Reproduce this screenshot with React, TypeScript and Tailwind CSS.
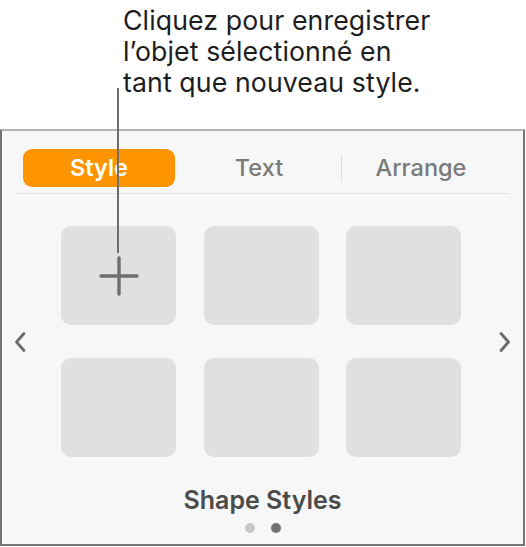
import { useState } from 'react';

const tabs = ['Style', 'Text', 'Arrange'];
const tiles = [0, 1, 2, 3, 4, 5];

function Chevron({ dir }: { dir: 'left' | 'right' }) {
  return (
    <svg width="14" height="22" viewBox="0 0 14 22" className="shrink-0">
      <path
        d={dir === 'left' ? 'M11 2.5 L3.5 11 L11 19.5' : 'M3 2.5 L10.5 11 L3 19.5'}
        fill="none"
        stroke="#6b6b6b"
        strokeWidth="2.8"
        strokeLinecap="round"
        strokeLinejoin="round"
      />
    </svg>
  );
}

function PlusIcon() {
  return (
    <svg width="40" height="40" viewBox="0 0 40 40">
      <path d="M20 2 V38 M2 20 H38" stroke="#6e6e6e" strokeWidth="3.4" strokeLinecap="round" />
    </svg>
  );
}

export default function App() {
  const [active, setActive] = useState('Style');

  return (
    <div className="relative w-[526px] h-[547px] bg-white font-['Inter',sans-serif] overflow-hidden">
      {/* callout */}
      <p className="ml-[123px] pt-[5px] h-[129px] text-[26.7px] leading-[31px] text-[#1d1d1f] tracking-[0.1px]">
        Cliquez pour enregistrer
        <br />
        l’objet sélectionné en
        <br />
        tant que nouveau style.
      </p>

      {/* sidebar panel */}
      <div className="w-[525px] h-[417px] bg-[#f7f7f7] border-2 border-[#757575] border-t-[#b3b3b3] flex flex-col">
        <div className="flex items-center mt-[18px] ml-[21px] h-[38px]">
          {tabs.map((tab, i) => (
            <div key={tab} className="flex items-center">
              {i === 2 && <div className="w-px h-[27px] bg-[#dedede] ml-[6px] mr-[3px]" />}
              <button
                onClick={() => setActive(tab)}
                className={
                  'w-[152px] h-[38px] rounded-[9px] text-[23.5px] font-medium ' +
                  (i === 1 ? 'ml-[8px] ' : '') +
                  (active === tab ? 'bg-[#fe9400] text-white font-semibold' : 'text-[#7a7a7a]')
                }
              >
                {tab}
              </button>
            </div>
          ))}
        </div>
        <div className="mx-[13px] mt-[6px] h-px bg-[#e2e2e2]" />

        <div className="flex items-center mt-[32px]">
          <div className="ml-[11px]">
            <Chevron dir="left" />
          </div>
          <div className="ml-[34px] grid grid-cols-3 gap-x-[27.5px] gap-y-[33px]">
            {tiles.map((t) => (
              <div key={t} className="w-[115px] h-[99px] rounded-[10px] bg-[#e0e0e0] flex items-center justify-center">
                {t === 0 && <PlusIcon />}
              </div>
            ))}
          </div>
          <div className="ml-[37px]">
            <Chevron dir="right" />
          </div>
        </div>

        <p className="mt-[28px] text-center text-[25px] leading-[30px] font-semibold text-[#4b4b4b]">Shape Styles</p>
        <div className="flex justify-center gap-[16px] mt-[8px]">
          <span className="w-[10px] h-[10px] rounded-full bg-[#c6c6c6]" />
          <span className="w-[10px] h-[10px] rounded-full bg-[#727272]" />
        </div>
      </div>

      {/* leader line */}
      <div className="absolute left-[117px] top-[88px] w-[2px] h-[165px] bg-[#6e6e6e]" />
    </div>
  );
}
